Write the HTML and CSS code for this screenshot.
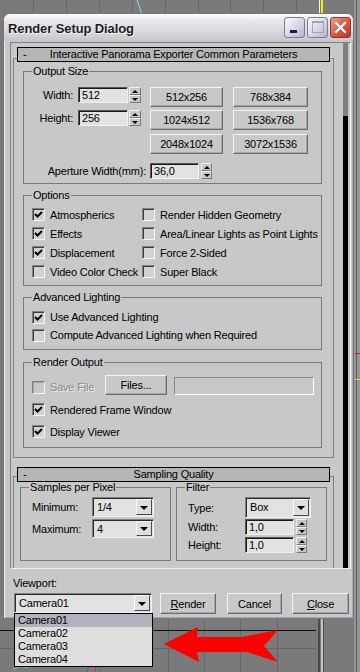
FILE: index.html
```html
<!DOCTYPE html>
<html lang="en">
<head>
    <meta charset="UTF-8">
    <title>Render Setup Dialog</title>
    <link rel="stylesheet" href="styles.css">
</head>
<body>
    <svg class="viewport" width="360" height="672" viewBox="0 0 360 672">
        <rect width="360" height="672" fill="#7a7a7a"/>
        <rect x="354" y="0" width="6" height="672" fill="#959595"/>
        <g stroke="#666" stroke-width="1">
            <line x1="33.5" y1="0" x2="33.5" y2="14"/>
            <line x1="66.5" y1="0" x2="66.5" y2="14"/>
            <line x1="99.5" y1="0" x2="99.5" y2="14"/>
            <line x1="132.5" y1="0" x2="132.5" y2="14"/>
            <line x1="165.5" y1="0" x2="165.5" y2="14"/>
            <line x1="198.5" y1="0" x2="198.5" y2="14"/>
            <line x1="230.5" y1="0" x2="230.5" y2="14"/>
            <line x1="263.5" y1="0" x2="263.5" y2="14"/>
            <line x1="296.5" y1="0" x2="296.5" y2="14"/>
            <line x1="168.5" y1="618" x2="168.5" y2="672"/>
            <line x1="204.5" y1="618" x2="204.5" y2="672"/>
            <line x1="240.5" y1="618" x2="240.5" y2="672"/>
            <line x1="277.5" y1="618" x2="277.5" y2="672"/>
            <line x1="0" y1="648.5" x2="316" y2="648.5"/>
        </g>
        <line x1="137" y1="0" x2="141.5" y2="13" stroke="#86dfe6" stroke-width="1"/>
        <line x1="319.5" y1="0" x2="319.5" y2="13" stroke="#f4f4f4"/>
        <rect x="321" y="0" width="2" height="13" fill="#f2ee00"/>
        <line x1="0" y1="630.5" x2="316" y2="630.5" stroke="#111" stroke-width="1"/>
        <rect x="318" y="618" width="2" height="54" fill="#4a4a4a"/>
        <rect x="321" y="618" width="2" height="54" fill="#c4c4c4"/>
        <rect x="323" y="618" width="1" height="54" fill="#4a4a4a"/>
        <line x1="356.5" y1="0" x2="356.5" y2="672" stroke="#5c5c5c"/>
        <line x1="355" y1="353.5" x2="360" y2="353.5" stroke="#d02020"/>
        <line x1="355" y1="379.5" x2="360" y2="379.5" stroke="#f0e000"/>
        <path d="M13 670 L22 664 L26 668 L35 662" fill="none" stroke="#7ee07e" stroke-width="1"/>
        <circle cx="94" cy="672" r="7" fill="none" stroke="#4a5ed0"/>
        <line x1="95.5" y1="664" x2="95.5" y2="672" stroke="#e03030"/>
        <polygon points="164,644 198,627 197,637 241,637 278,630 264,646 278,662 247,652 197,652 199,662" fill="#ff0000"/>
    </svg>

    <div class="dialog">
        <div class="titlebar">
            <span class="title">Render Setup Dialog</span>
            <span class="cap-btn cap-min"><i></i></span>
            <span class="cap-btn cap-max"><i></i></span>
            <span class="cap-btn cap-close">
                <svg width="19" height="19" viewBox="0 0 19 19">
                    <path d="M5 5L14 14M14 5L5 14" stroke="#fff" stroke-width="2.2" stroke-linecap="square"/>
                </svg>
            </span>
        </div>

        <div class="client">
            <div class="panel">
                <div class="scroll-area">

                    <div class="rollout">
                        <div class="rollout-head"><span class="minus">-</span><span>Interactive Panorama Exporter Common Parameters</span><span></span></div>
                        <div class="rollout-frame">

                            <div class="group g-output">
                                <div class="group-title">Output Size</div>
                                <div class="size-row first">
                                    <span class="field-label size-label">Width:</span>
                                    <span class="edit e-size">512</span>
                                    <span class="spinner"><i class="up"></i><i class="down"></i></span>
                                    <span class="btn res-a">512x256</span>
                                    <span class="btn res-b">768x384</span>
                                </div>
                                <div class="size-row second">
                                    <span class="field-label size-label">Height:</span>
                                    <span class="edit e-size">256</span>
                                    <span class="spinner"><i class="up"></i><i class="down"></i></span>
                                    <span class="btn res-a">1024x512</span>
                                    <span class="btn res-b">1536x768</span>
                                </div>
                                <div class="size-row third">
                                    <span class="btn res-a solo">2048x1024</span>
                                    <span class="btn res-b">3072x1536</span>
                                </div>
                                <div class="size-row aperture">
                                    <span class="field-label ap-label">Aperture Width(mm):</span>
                                    <span class="edit e-ap">36,0</span>
                                    <span class="spinner sp-ap"><i class="up"></i><i class="down"></i></span>
                                </div>
                            </div>

                            <div class="group g-options">
                                <div class="group-title">Options</div>
                                <div class="check-row first">
                                    <span class="check-item col-left"><span class="check on"><svg viewBox="0 0 11 11"><path d="M2 5l2.5 2.5L9 3"/></svg></span>Atmospherics</span>
                                    <span class="check-item"><span class="check"></span>Render Hidden Geometry</span>
                                </div>
                                <div class="check-row">
                                    <span class="check-item col-left"><span class="check on"><svg viewBox="0 0 11 11"><path d="M2 5l2.5 2.5L9 3"/></svg></span>Effects</span>
                                    <span class="check-item"><span class="check"></span>Area/Linear Lights as Point Lights</span>
                                </div>
                                <div class="check-row">
                                    <span class="check-item col-left"><span class="check on"><svg viewBox="0 0 11 11"><path d="M2 5l2.5 2.5L9 3"/></svg></span>Displacement</span>
                                    <span class="check-item"><span class="check"></span>Force 2-Sided</span>
                                </div>
                                <div class="check-row">
                                    <span class="check-item col-left"><span class="check"></span>Video Color Check</span>
                                    <span class="check-item"><span class="check"></span>Super Black</span>
                                </div>
                            </div>

                            <div class="group g-adv">
                                <div class="group-title">Advanced Lighting</div>
                                <div class="check-row short first">
                                    <span class="check-item"><span class="check on"><svg viewBox="0 0 11 11"><path d="M2 5l2.5 2.5L9 3"/></svg></span>Use Advanced Lighting</span>
                                </div>
                                <div class="check-row short">
                                    <span class="check-item"><span class="check"></span>Compute Advanced Lighting when Required</span>
                                </div>
                            </div>

                            <div class="group g-output2">
                                <div class="group-title">Render Output</div>
                                <div class="file-row">
                                    <span class="check-item disabled"><span class="check"></span><span class="save-label">Save File</span></span>
                                    <span class="btn files-btn">Files...</span>
                                    <span class="path-field"></span>
                                </div>
                                <div class="check-row rfw">
                                    <span class="check-item"><span class="check on"><svg viewBox="0 0 11 11"><path d="M2 5l2.5 2.5L9 3"/></svg></span>Rendered Frame Window</span>
                                </div>
                                <div class="check-row dv">
                                    <span class="check-item"><span class="check on"><svg viewBox="0 0 11 11"><path d="M2 5l2.5 2.5L9 3"/></svg></span>Display Viewer</span>
                                </div>
                            </div>

                        </div>
                    </div>

                    <div class="rollout second-rollout">
                        <div class="rollout-head"><span class="minus">-</span><span>Sampling Quality</span><span></span></div>
                        <div class="rollout-frame sampling">
                            <div class="group g-samples">
                                <div class="group-title">Samples per Pixel</div>
                                <div class="form-row r1">
                                    <span class="field-label s-label">Minimum:</span>
                                    <span class="combo c-samp"><span class="combo-text">1/4</span><span class="combo-btn"></span></span>
                                </div>
                                <div class="form-row r2">
                                    <span class="field-label s-label">Maximum:</span>
                                    <span class="combo c-samp"><span class="combo-text">4</span><span class="combo-btn"></span></span>
                                </div>
                            </div>
                            <div class="group g-filter">
                                <div class="group-title">Filter</div>
                                <div class="form-row r1">
                                    <span class="field-label f-label">Type:</span>
                                    <span class="combo c-type"><span class="combo-text">Box</span><span class="combo-btn"></span></span>
                                </div>
                                <div class="form-row r2 narrow">
                                    <span class="field-label f-label">Width:</span>
                                    <span class="edit e-filter">1,0</span>
                                    <span class="spinner sp-ap"><i class="up"></i><i class="down"></i></span>
                                </div>
                                <div class="form-row r3 narrow">
                                    <span class="field-label f-label">Height:</span>
                                    <span class="edit e-filter">1,0</span>
                                    <span class="spinner sp-ap"><i class="up"></i><i class="down"></i></span>
                                </div>
                            </div>
                        </div>
                    </div>

                </div>
                <div class="scrollbar"><div class="thumb"></div></div>
            </div>

            <div class="footer">
                <div class="viewport-label">Viewport:</div>
                <div class="footer-row">
                    <span class="combo c-view">
                        <span class="combo-text">Camera01</span><span class="combo-btn"></span>
                        <span class="droplist">
                            <span class="drop-item selected">Camera01</span>
                            <span class="drop-item">Camera02</span>
                            <span class="drop-item">Camera03</span>
                            <span class="drop-item">Camera04</span>
                        </span>
                    </span>
                    <span class="btn f-btn b-render"><u>R</u>ender</span>
                    <span class="btn f-btn b-cancel">Cancel</span>
                    <span class="btn f-btn b-close"><u>C</u>lose</span>
                </div>
            </div>
        </div>
    </div>
</body>
</html>
```

FILE: styles.css
```css
* { box-sizing: border-box; }
html, body { margin: 0; }
body {
    width: 360px; height: 672px; overflow: hidden;
    position: relative;
    background: #7a7a7a;
    font-family: "Liberation Sans", Arial, sans-serif;
    font-size: 11px;
    letter-spacing: -0.2px;
    color: #000;
}
.viewport { position: absolute; left: 0; top: 0; }

/* window */
.dialog {
    position: relative; z-index: 1;
    margin: 13px 0 0 3px;
    width: 351px; height: 606px;
    border: 1px solid #747482;
    border-radius: 7px 7px 0 0;
    background: #c8c8c8;
    box-shadow: inset 1px 0 0 #ececf0, inset -1px 0 0 #a8a8b0, inset 0 -1px 0 #a8a8b0;
    display: flex; flex-direction: column;
}
.titlebar {
    height: 27px;
    display: flex; align-items: center;
    padding: 0 2px 0 4px;
    border-radius: 6px 6px 0 0;
    background: linear-gradient(#fbfbfc, #e4e4e8 30%, #d6d6dc 70%, #c6c6ce);
}
.title {
    flex: 1;
    font-weight: bold; font-size: 13px;
    letter-spacing: -0.1px;
    color: #1e1e1e;
    text-shadow: 1px 1px 0 #f4f4f4;
    padding-top: 1px;
}
.cap-btn {
    width: 21px; height: 21px;
    margin-left: 2px;
    border: 1px solid #7c7c94;
    border-radius: 3px;
    background: linear-gradient(135deg, #fafafe, #dadae6 50%, #b4b4c8);
    display: flex;
}
.cap-min i {
    width: 7px; height: 3px;
    margin: 12px 0 0 5px;
    background: #1c1c4c;
}
.cap-max i {
    width: 12px; height: 12px;
    margin: 3px 0 0 4px;
    border: 1px solid #a4a4b4;
    border-top-width: 2px;
}
.cap-close {
    border-color: #8a3a34;
    background: linear-gradient(135deg, #f0a090, #da5a44 50%, #c03420);
}

.client {
    flex: 1;
    padding: 1px 2px 0 6px;
    display: flex; flex-direction: column;
}

/* rollout panel */
.panel {
    height: 527px;
    border: 1px solid;
    border-color: #808080 #f2f2f2 #f2f2f2 #808080;
    display: flex;
}
.scroll-area {
    flex: 1;
    overflow: hidden;
    padding: 4px 0 0 2px;
}
.scrollbar {
    width: 5px; margin-right: 2px;
    background: #808080;
    display: flex; flex-direction: column;
}
.scrollbar .thumb { margin-top: 73px; flex: 1; background: #000; }

.rollout { width: 321px; }
.second-rollout { margin-top: 9px; }
.rollout-head {
    position: relative; z-index: 1;
    margin: 0 4px -4px;
    height: 15px;
    border: 1px solid #000;
    background: #b6b6b6;
    line-height: 13px;
    display: grid;
    grid-template-columns: 22px 1fr 22px;
    text-align: center;
}
.rollout-head .minus { text-align: left; padding-left: 5px; }
.second-rollout .rollout-head { margin-bottom: -6px; }
.rollout-frame {
    border: 1px solid #808080;
    padding: 12px 11px 9px 9px;
}
.rollout-frame.sampling {
    display: flex; gap: 5px;
    padding: 10px 4px 30px 6px;
}

/* group boxes */
.group {
    border: 1px solid #7a7a7a;
    margin-top: 11px;
}
.group-title {
    display: table;
    margin: -7px 0 0 8px;
    padding: 0 1px;
    line-height: 13px;
    background: #c8c8c8;
}
.g-output { height: 113px; margin-top: 0; }
.g-options { height: 91px; }
.g-adv { height: 53px; }
.g-output2 { height: 86px; margin-top: 12px; }
.g-samples, .g-filter { width: 151px; height: 74px; margin-top: 0; }
.g-samples .form-row { padding-left: 10px; }
.g-filter .form-row { padding-left: 11px; }

/* controls */
.btn {
    display: flex; align-items: center; justify-content: center;
    height: 20px;
    background: #c8c8c8;
    border: 1px solid;
    border-color: #f4f4f4 #6c6c6c #6c6c6c #f4f4f4;
    box-shadow: inset -1px -1px 0 #a6a6a6;
    white-space: nowrap;
}
.edit {
    display: block;
    height: 16px;
    padding: 0 3px;
    line-height: 14px;
    background: #e2e2e2;
    border: 1px solid;
    border-color: #555 #f2f2f2 #f2f2f2 #555;
    box-shadow: inset 1px 1px 0 #1a1a1a;
}
.spinner {
    width: 12px; height: 16px;
    margin-left: 1px;
    display: flex; flex-direction: column;
}
.spinner i {
    flex: 1;
    display: flex; align-items: center; justify-content: center;
    background: #c8c8c8;
    border: 1px solid;
    border-color: #f2f2f2 #7a7a7a #7a7a7a #f2f2f2;
}
.spinner .up::after {
    content: "";
    border-left: 3px solid transparent; border-right: 3px solid transparent;
    border-bottom: 3px solid #000;
}
.spinner .down::after {
    content: "";
    border-left: 3px solid transparent; border-right: 3px solid transparent;
    border-top: 3px solid #000;
}
.combo {
    display: flex;
    border: 1px solid;
    border-color: #808080 #f2f2f2 #f2f2f2 #808080;
    box-shadow: inset 1px 1px 0 #2a2a2a;
    background: #e2e2e2;
}
.combo-text { flex: 1; padding: 1px 0 0 4px; line-height: 16px; }
.combo-btn {
    width: 16px;
    margin: 1px 1px 1px 0;
    background: #dedede;
    border: 1px solid;
    border-color: #fafafa #4a4a4a #4a4a4a #fafafa;
    display: flex; align-items: center; justify-content: center;
}
.combo-btn::after {
    content: "";
    border-left: 4px solid transparent; border-right: 4px solid transparent;
    border-top: 4px solid #000;
    margin-top: 1px;
}

.field-label { white-space: nowrap; }

/* output size rows */
.size-row { display: flex; align-items: flex-start; height: 20px; }
.size-row.first { margin-top: 9px; }
.size-row.second { margin-top: 3px; }
.size-row.third { margin-top: 4px; }
.size-row.aperture { margin-top: 9px; height: 16px; }
.size-label { width: 54px; text-align: right; padding-right: 5px; line-height: 16px; }
.e-size { width: 50px; }
.res-a { width: 73px; margin-left: 9px; }
.res-a.solo { margin-left: 126px; }
.res-b { width: 75px; margin-left: 10px; }
.ap-label { width: 125px; text-align: right; padding-right: 3px; line-height: 16px; }
.e-ap { width: 49px; margin-left: 1px; }
.sp-ap { width: 11px; margin-left: 2px; }

/* checkbox rows */
.check-row { display: flex; align-items: center; height: 19px; padding-left: 8px; }
.check-row.first { margin-top: 3px; }
.check-row.short { height: 18px; }
.g-adv .check-row.first { margin-top: 4px; }
.check-row.rfw { margin-top: 5px; }
.check-row.dv { margin-top: 3px; }
.check-item { display: flex; align-items: center; white-space: nowrap; }
.col-left { width: 110px; }
.check {
    width: 13px; height: 13px;
    margin-right: 5px;
    flex: none;
    border: 1px solid;
    border-color: #808080 #f6f6f6 #f6f6f6 #808080;
    box-shadow: inset 1px 1px 0 #3c3c3c;
    background: #d2d2d2;
    display: flex;
}
.check svg { width: 11px; height: 11px; }
.check path { fill: none; stroke: #000; stroke-width: 2; }
.check-item.disabled { color: #8a8a8a; text-shadow: 1px 1px 0 #eeeeee; }
.check-item.disabled .check { background: #c8c8c8; box-shadow: inset 1px 1px 0 #a8a8a8; }

.file-row { display: flex; align-items: flex-end; height: 20px; margin-top: 6px; padding-left: 8px; }
.file-row .check-item { align-self: center; margin-top: 4px; }
.save-label { width: 55px; }
.files-btn { width: 62px; margin-left: 0; }
.path-field {
    width: 140px; height: 18px;
    margin-left: 7px;
    border: 1px solid;
    border-color: #8a8a8a #ffffff #ffffff #8a8a8a;
    background: #c8c8c8;
}

/* sampling rows */
.form-row { display: flex; align-items: center; }
.form-row.r1 { margin-top: 3px; height: 20px; }
.form-row.r2 { margin-top: 2px; height: 19px; }
.form-row.r3 { margin-top: 2px; height: 16px; }
.form-row.narrow { height: 16px; }
.g-filter .form-row.r1 { height: 21px; }
.g-filter .form-row.r2 { margin-top: 1px; }
.s-label { width: 61px; padding-left: 1px; }
.c-samp { width: 62px; height: 100%; }
.f-label { width: 57px; }
.c-type { width: 66px; height: 100%; }
.e-filter { width: 49px; }

/* footer */
.footer { padding: 8px 0 0 3px; }
.viewport-label { line-height: 13px; }
.footer-row { display: flex; margin-top: 3px; }
.c-view { position: relative; width: 138px; height: 20px; margin-left: 1px; }
.f-btn { height: 21px; }
.b-render { width: 56px; margin-left: 8px; }
.b-cancel { width: 55px; margin-left: 11px; }
.b-close { width: 57px; margin-left: 10px; }

.droplist {
    position: absolute; left: -1px; top: 19px; z-index: 5;
    width: 139px;
    border: 1px solid #000;
    background: #dedede;
    display: flex; flex-direction: column;
}
.drop-item { height: 13px; line-height: 13px; padding-left: 3px; }
.drop-item.selected { background: #b2b2bc; }
```
